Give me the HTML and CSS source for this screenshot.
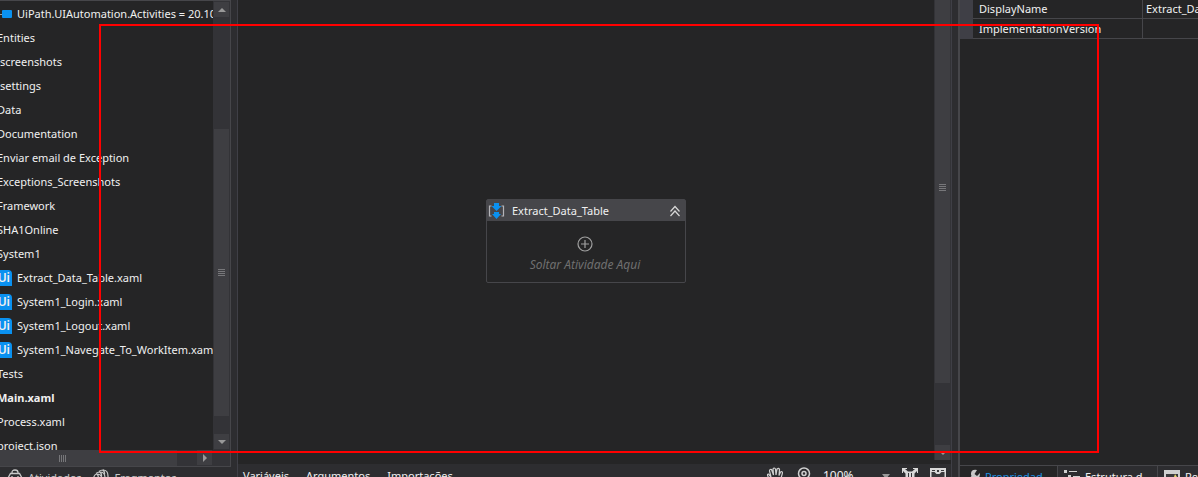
FILE: index.html
```html
<!DOCTYPE html>
<html lang="pt-BR">
<head>
<meta charset="utf-8">
<title>Extract_Data_Table</title>
<link rel="stylesheet" href="styles.css">
</head>
<body>
<main class="shell">
  <section class="project">
    <div class="project-frame">
      <div class="tree-area">
        <ul class="tree">
          <li class="file"><svg width="15" height="16" viewBox="0 0 15 16"><path d="M0 8.500h5" stroke="#a0a0a0"/><rect x="5" y="4" width="10" height="8" rx="1" fill="#0a91f0"/></svg>UiPath.UIAutomation.Activities = 20.10</li>
          <li>Entities</li>
          <li>.screenshots</li>
          <li>.settings</li>
          <li>Data</li>
          <li>Documentation</li>
          <li>Enviar email de Exception</li>
          <li>Exceptions_Screenshots</li>
          <li>Framework</li>
          <li>SHA1Online</li>
          <li>System1</li>
          <li class="file"><span class="ui-icon">Ui</span>Extract_Data_Table.xaml</li>
          <li class="file"><span class="ui-icon">Ui</span>System1_Login.xaml</li>
          <li class="file"><span class="ui-icon">Ui</span>System1_Logout.xaml</li>
          <li class="file"><span class="ui-icon">Ui</span>System1_Navegate_To_WorkItem.xaml</li>
          <li>Tests</li>
          <li class="main-file">Main.xaml</li>
          <li>Process.xaml</li>
          <li>project.json</li>
        </ul>
        <div class="vbar">
          <button class="bar-btn" aria-label="Rolar para cima"><svg width="8" height="4"><path d="M0 4 4 0l4 4z" fill="#999"/></svg></button>
          <div class="vtrack project-track"><div class="thumb"><i class="grip"></i></div></div>
          <button class="bar-btn" aria-label="Rolar para baixo"><svg width="8" height="4"><path d="M0 0h8L4 4z" fill="#999"/></svg></button>
        </div>
      </div>
      <div class="hbar">
        <div class="hthumb"><i class="grip upright"></i></div>
        <button class="bar-btn" aria-label="Rolar para a direita"><svg width="4" height="8"><path d="M0 0v8l4-4z" fill="#999"/></svg></button>
      </div>
    </div>
    <nav class="project-tabs">
      <button><svg width="16" height="18" viewBox="0 0 16 18" fill="none" stroke="#c8c8c8" stroke-width="1.300"><path d="M5 5V3.500Q5 1 8 1t3 2.500V5M3.500 4.500h9L15 9v8H1V9zM1 9h14M5 7v4M11 7v4"/></svg>Atividades</button>
      <button><svg width="16" height="18" viewBox="0 0 16 18" fill="none" stroke="#c8c8c8" stroke-width="1.200"><path d="M6 2.500Q7.500 1 10 1q5 0 5 6v6h-2M3 4.500Q4.500 3 7 3q5 0 5 6v6h-2M1 7.500Q2 5 4 5q5 0 5 6v6H1zM4 5q2 2 1 5h4M10 1q2 2 1.500 4M7 3q2 2 1.500 4"/></svg>Fragmentos</button>
    </nav>
  </section>

  <section class="designer">
    <div class="canvas-area">
      <div class="canvas">
        <article class="activity">
          <header>
            <svg width="18" height="18" viewBox="0 0 18 18"><path d="M4.500 4H2.500v10h2M14.500 4h2v10h-2" fill="none" stroke="#b4b4b8" stroke-width="1.200"/><path d="M7 1h5v3h2.500l-5 5-5-5H7zM7 10h5v2h2l-4.500 5L5 12h2z" fill="#0a91f0"/></svg>
            <h1>Extract_Data_Table</h1>
            <button aria-label="Recolher"><svg width="12" height="12" viewBox="0 0 12 12" fill="none" stroke="#d8d8d8" stroke-width="1.200"><path d="m1.500 6.500 4.500-5 4.500 5M1.500 11 6 6l4.500 5"/></svg></button>
          </header>
          <div class="drop">
            <svg width="16" height="16" viewBox="0 0 16 16" fill="none" stroke="#a0a0a0" stroke-width="1.200"><circle cx="8" cy="8" r="7"/><path d="M8 4v8M4 8h8"/></svg>
            <p>Soltar Atividade Aqui</p>
          </div>
        </article>
      </div>
      <div class="vbar canvas-bar">
        <div class="vtrack canvas-track"><div class="thumb"><i class="grip"></i></div></div>
        <button class="bar-btn" aria-label="Rolar para baixo"><svg width="8" height="4"><path d="M0 0h8L4 4z" fill="#999"/></svg></button>
      </div>
    </div>
    <footer class="designer-bar">
      <button>Variáveis</button>
      <button>Argumentos</button>
      <button>Importações</button>
      <div class="view-tools">
        <button aria-label="Mover"><svg width="16" height="18" viewBox="0 0 16 18" fill="none" stroke="#d0d0d0" stroke-width="1.200"><path d="M5 17 1 9.500Q-.5 7 1.500 7L4 10 2.500 4q0-2 2-1.500L6.500 8 6 2q1-2 2.500 0L9 8l1-6q2-1.500 2.500.5L12 8.500 13.500 5q2-1 2 1l-2 7-2 4z"/></svg></button>
        <button aria-label="Zoom"><svg width="16" height="18" viewBox="0 0 16 18" fill="none" stroke="#d0d0d0"><circle cx="9" cy="6.500" r="5.500" stroke-width="1.500"/><circle cx="9" cy="6.500" r="2" stroke-width="1.500"/><path d="m5.500 10.500-4 5" stroke-width="2.500"/></svg></button>
        <label class="zoom"><select aria-label="Nível de zoom"><option>100%</option></select><svg width="8" height="5"><path d="M0 0h8L4 5z" fill="#999"/></svg></label>
        <button aria-label="Ajustar à tela"><svg width="16" height="18" viewBox="0 0 16 18"><path d="M0 1h5v1H3l3 2.500h4L13 2h-2V1h5v5h-1V4l-2.500 2.500v6L15 15v-2h1v5h-5v-1h2l-3-2.500H6L3 17h2v1H0v-5h1v2l2.500-2.500v-6L1 4v2H0z" fill="#d8d8d8"/><path d="M6.500 6v8M9.500 6v8" stroke="#333337"/></svg></button>
        <button aria-label="Visão geral"><svg width="16" height="18" viewBox="0 0 16 18"><path d="M0 1h16v16H0z" fill="#d8d8d8"/><path d="M1.500 5v10h13V5h-3l-2 2h-3l-2-2zM2 3h3v1H2zM7 3h2v2H7zM11 3h3v1h-3z" fill="#39393b"/><path d="M5 10h6v4H5z" fill="#d8d8d8"/></svg></button>
      </div>
    </footer>
  </section>

  <section class="properties">
    <div class="property-area">
      <table>
        <tr><td class="gutter"></td><th scope="row">DisplayName</th><td class="value">Extract_Data_Table</td></tr>
        <tr><td class="gutter"></td><th scope="row">ImplementationVersion</th><td class="value"></td></tr>
      </table>
    </div>
    <nav class="property-tabs">
      <button class="active"><svg width="14" height="16" viewBox="0 0 14 16"><path d="M11 1Q5 0 5 5q0 1 .5 2L1 12q-1 2 .5 3t3 0L9 10q5 1 5-6l-3 3-2.500-2z" fill="#c8c8c8"/></svg><span>Propriedad</span></button>
      <button><svg width="16" height="16" viewBox="0 0 16 16"><path d="M0 1h3v3H0zM4 6h3v3H4zM4 11h3v3H4zM5 2h8v1H5zM9 7h7v1H9zM9 12h7v1H9z" fill="#d0d0d0"/></svg><span>Estrutura d</span></button>
      <button><svg width="16" height="16" viewBox="0 0 16 16"><path d="M0 1h16v14H0z" fill="#d0d0d0"/><path d="M2 5h12v8H2z" fill="#3a3a3c"/><path d="m11 5 2 3 3 1-3 2-1 3-2-3-3-1 3-2z" fill="#e8d66c"/></svg><span>Recursos</span></button>
    </nav>
  </section>
  <div class="highlight"></div>
</main>
</body>
</html>
```
FILE: styles.css
```css
* { box-sizing: border-box; }
body {
  margin: 0;
  height: 100vh;
  overflow: hidden;
  background: #2d2d30;
  color: #f0f0f0;
  font: 11px/16px "Noto Sans", "Open Sans", sans-serif;
}
button, select {
  font: inherit;
  color: inherit;
  background: none;
  border: 0;
  padding: 0;
  margin: 0;
}
svg { flex: none; display: block; }

.shell {
  position: relative;
  display: grid;
  grid-template-columns: 231px minmax(0, 1fr) 240px;
  column-gap: 6px;
  height: calc(100vh + 11px);
}
.project, .designer, .properties {
  display: flex;
  flex-direction: column;
  min-width: 0;
  min-height: 0;
}

/* project tree */
.project-frame {
  flex: 1;
  min-height: 0;
  display: flex;
  flex-direction: column;
  background: #252526;
  border: solid #46464a;
  border-width: 1px 1px 1px 0;
}
.tree-area { flex: 1; min-height: 0; display: flex; overflow: hidden; }
.tree {
  flex: 1;
  min-width: 0;
  margin: 0;
  padding: 1px 0 0;
  list-style: none;
  overflow: hidden;
  white-space: nowrap;
}
.tree li { display: flex; align-items: center; height: 24px; margin-left: -3px; }
.tree .file { gap: 5px; }
.main-file { font-weight: 700; }
.ui-icon {
  flex: none;
  width: 15px;
  height: 16px;
  border-radius: 0 4px 0 0;
  background: #0a91f0;
  text-align: right;
  padding-right: 2px;
  font-size: 12px;
  font-weight: 600;
}

/* scroll bars */
.vbar {
  display: flex;
  flex-direction: column;
  flex: none;
  width: 17px;
  padding: 1px;
  background: #333337;
}
.vtrack { flex: 1; min-height: 0; display: flex; flex-direction: column; }
.thumb, .hthumb {
  display: flex;
  align-items: center;
  justify-content: center;
  background: #3e3e42;
}
.thumb { flex: 1; }
.project-track { padding: 112px 0 18px; }
.canvas-bar { padding: 0 1px; margin-bottom: 4px; }
.canvas-track { padding-bottom: 62px; }
.canvas-track .thumb { padding-bottom: 8px; }
.bar-btn {
  display: flex;
  align-items: center;
  justify-content: center;
  flex: none;
  width: 15px;
  height: 15px;
  background: #3e3e42;
}
.grip {
  width: 7px;
  height: 7px;
  background: repeating-linear-gradient(#77777a 0 1px, transparent 1px 2px);
}
.upright { background: repeating-linear-gradient(90deg, #77777a 0 1px, transparent 1px 2px); }
.hbar {
  display: flex;
  justify-content: space-between;
  height: 16px;
  padding-right: 18px;
  background: #333337;
}
.hthumb { width: 177px; padding-right: 53px; }

.project-tabs { display: flex; gap: 12px; height: 21px; padding-left: 7px; color: #c8c8c8; }
.project-tabs button { display: flex; align-items: center; gap: 5px; }

/* designer */
.designer { background: #252526; border: solid #3f3f46; border-width: 0 1px; }
.canvas-area { flex: 1; min-height: 0; display: flex; }
.canvas { flex: 1; display: flex; align-items: center; justify-content: center; padding-top: 18px; }
.activity { width: 200px; border: 1px solid #46464a; border-radius: 2px; }
.activity header {
  display: flex;
  align-items: center;
  gap: 7px;
  height: 21px;
  padding-right: 4px;
  background: #46464a;
}
.activity h1 { flex: 1; margin: 0; font-size: 11px; font-weight: 400; }
.drop { display: flex; flex-direction: column; align-items: center; gap: 5px; padding: 15px 2px 9px 0; }
.drop p { margin: 0; color: #707070; font-size: 12px; font-style: italic; }
.designer-bar {
  display: flex;
  gap: 17px;
  height: 24px;
  padding: 0 5px;
  background: #2d2d30;
}
.view-tools { display: flex; align-items: center; gap: 12px; margin-left: auto; }
.zoom { display: flex; align-items: center; width: 67px; }
.zoom select { flex: 1; appearance: none; font-size: 12px; }

/* properties */
.properties { background: #252526; border-left: 2px solid #46464a; overflow: hidden; }
.property-area { flex: 1; min-height: 0; border-bottom: 1px solid #46464a; }
table { width: 100%; border-spacing: 0; table-layout: fixed; }
tr { height: 20px; }
tr:first-child { height: 19px; }
td, th { padding: 0; border-bottom: 1px solid #46464a; font-weight: 400; text-align: left; }
.gutter { width: 13px; background: #3f3f46; border-color: #3f3f46; }
th { width: 170px; padding-left: 6px; border-right: 1px solid #46464a; }
.value { padding-left: 3px; white-space: nowrap; overflow: hidden; }
.property-tabs { display: flex; height: 22px; background: #2d2d30; }
.property-tabs button {
  display: flex;
  align-items: center;
  flex: none;
  gap: 5px;
  width: 100px;
  padding-left: 6px;
  white-space: nowrap;
  border-right: 1px solid #46464a;
}
.property-tabs .active { width: 98px; background: #252526; color: #1e90e0; }

.highlight {
  position: absolute;
  top: 24px;
  left: 99px;
  right: 99px;
  bottom: 35px;
  border: 2px solid #f00;
  pointer-events: none;
}
```
